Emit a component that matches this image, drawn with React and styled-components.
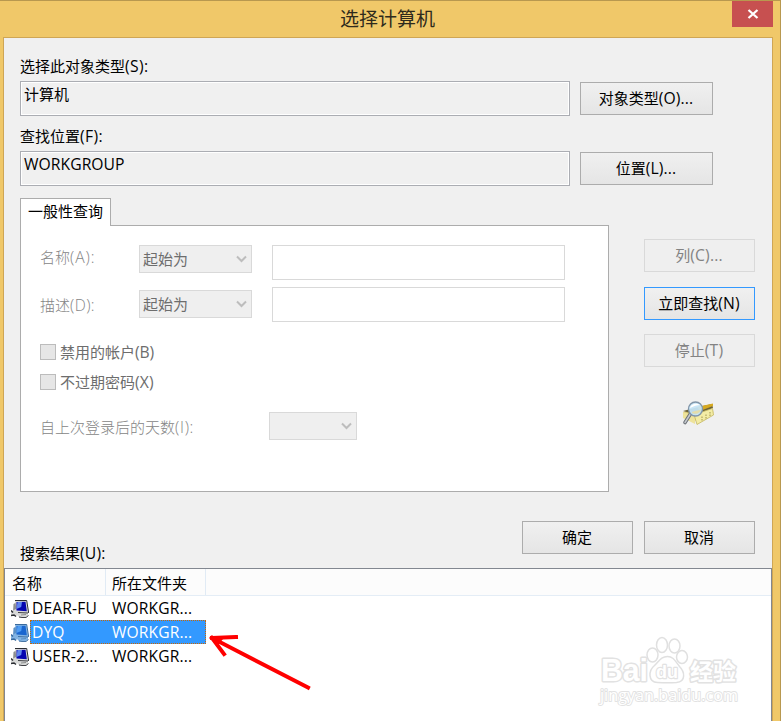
import React from "react";
import styled, { createGlobalStyle } from "styled-components";

const GlobalStyle = createGlobalStyle`
  *, *::before, *::after { box-sizing: border-box; }
  body {
    margin: 0;
    overflow: hidden;
    font-family: "Open Sans", "Noto Sans CJK SC", sans-serif;
    font-size: 15px;
    line-height: 20px;
    color: #000;
  }
`;

const Window = styled.div`
  width: 781px;
  height: 721px;
  display: flex;
  flex-direction: column;
  background: #f0c869;
  border-top: 1px solid #b8984f;
  border-right: 1px solid #b8984f;
  padding: 0 7px 0 3px;
  overflow: hidden;
`;

const TitleBar = styled.header`
  height: 36px;
  flex: none;
  display: grid;
  grid-template-columns: 1fr 41px;
  align-items: start;
`;

const Title = styled.h1`
  margin: 0;
  padding: 5px 0 0 40px;
  font-size: 19px;
  font-weight: 400;
  line-height: 26px;
  text-align: center;
  color: #2e2a1c;
`;

const CloseButton = styled.button`
  width: 41px;
  height: 26px;
  border: 0;
  padding: 0;
  background: #c75050;
  display: grid;
  place-items: center;
`;

const Client = styled.main`
  flex: 1;
  display: flex;
  flex-direction: column;
  background: #f0f0f0;
  border: 1px solid #cfa655;
  border-bottom: 0;
`;

const Form = styled.div`
  height: 530px;
  flex: none;
  display: flex;
  flex-direction: column;
  padding: 18px 16px 0;
`;

/* Latin letters run slightly larger than the CJK glyphs around them. */
const Latin = styled.span`
  font-size: 15.7px;
  line-height: 1;
  letter-spacing: ${(p) => p.$spacing || 0.15}px;
`;

const Label = styled.div`
  height: 25px;
  line-height: 20px;
`;

const PickRow = styled.div`
  height: 35px;
  display: flex;
  align-items: center;
  gap: 10px;
  margin-bottom: ${(p) => p.$after}px;
`;

const ReadOnlyField = styled.div`
  width: 550px;
  height: 35px;
  border: 1px solid #abadb3;
  box-shadow: inset 0 0 0 1px #fff;
  padding: 2px 3px;
  line-height: 20px;
`;

const Button = styled.button`
  width: ${(p) => p.$width || 111}px;
  height: 33px;
  flex: none;
  padding: 0 1px 2px 0;
  font: inherit;
  line-height: 20px;
  color: ${(p) => (p.disabled ? "#838383" : "#000")};
  background: ${(p) => (p.disabled ? "#efefef" : "linear-gradient(#f0f0f0, #e5e5e5)")};
  border: 1px solid ${(p) => (p.disabled ? "#d9d9d9" : p.$primary ? "#3399ff" : "#acacac")};
`;

const QueryArea = styled.div`
  display: flex;
  gap: 35px;
`;

const Tabs = styled.div`
  width: 589px;
`;

const Tab = styled.div`
  width: 91px;
  height: 28px;
  margin-bottom: -1px;
  position: relative;
  padding: 2px 0 0 7px;
  background: #fff;
  border: 1px solid #acacac;
  border-bottom: 0;
`;

const Panel = styled.section`
  height: 267px;
  display: flex;
  flex-direction: column;
  background: #fff;
  border: 1px solid #acacac;
  padding: 19px 19px 0;
`;

const CriteriaRow = styled.div`
  height: 35px;
  display: grid;
  grid-template-columns: 99px 113px 293px;
  margin-bottom: ${(p) => p.$after}px;
`;

const MutedLabel = styled.span`
  padding-top: ${(p) => p.$top}px;
  color: #858585;
  font-weight: 300;
  white-space: nowrap;
`;

const Select = styled.div`
  width: ${(p) => p.$width}px;
  height: 28px;
  margin-top: ${(p) => p.$top || 0}px;
  display: flex;
  align-items: center;
  justify-content: space-between;
  padding: 0 4px 0 3px;
  color: #6d6d6d;
  background: #efefef;
  border: 1px solid #d9d9d9;
`;

const TextInput = styled.div`
  width: 293px;
  height: 35px;
  margin-left: 20px;
  border: 1px solid #d9d9d9;
  background: #fff;
`;

const CheckRow = styled.div`
  height: 16px;
  display: flex;
  align-items: center;
  gap: 4px;
  margin-bottom: ${(p) => p.$after}px;
  color: #6d6d6d;
`;

const CheckBox = styled.span`
  width: 16px;
  height: 16px;
  background: #e6e6e6;
  border: 1px solid #bcbcbc;
`;

const LogonRow = styled.div`
  height: 28px;
  display: grid;
  grid-template-columns: 229px 88px;
`;

const Actions = styled.div`
  padding-top: 41px;
  display: flex;
  flex-direction: column;
`;

const ActionSlot = styled.div`
  height: ${(p) => p.$height}px;
`;

const IconSlot = styled.div`
  padding-left: 38px;
  line-height: 0;
`;

const Footer = styled.div`
  display: flex;
  align-items: flex-start;
  gap: 11px;
  padding-top: 29px;
`;

const ResultLabel = styled.div`
  width: 491px;
  padding-top: 22px;
`;

const ResultList = styled.section`
  flex: 1;
  position: relative;
  background: #fff;
  border: 1px solid #828790;
  border-bottom: 0;
`;

const ListHeader = styled.div`
  height: 27px;
  display: grid;
  grid-template-columns: 101px 100px 1fr;
  background: #fcfcfc;
  border-bottom: 1px solid #e4edf6;
`;

const HeaderCell = styled.div`
  padding: 4px 0 0 ${(p) => p.$left}px;
  border-right: 1px solid #e1ebf5;
`;

const ResultRow = styled.div`
  height: 24px;
  display: grid;
  grid-template-columns: 25px 176px;
`;

const IconCell = styled.div`
  padding: 4px 0 0 6px;
  line-height: 0;
`;

const Cells = styled.div`
  height: 24px;
  display: grid;
  grid-template-columns: 79px 1fr;
  font-size: 15.6px;
  letter-spacing: 0.15px;
  line-height: 23px;
  white-space: nowrap;
  color: ${(p) => (p.$selected ? "#fff" : "#000")};
  background: ${(p) => (p.$selected ? "#3399ff" : "transparent")};
  border: 1px ${(p) => (p.$selected ? "dotted #cc6600" : "solid transparent")};
`;

const CellText = styled.span`
  padding-left: ${(p) => p.$left}px;
`;

const Arrow = styled.svg`
  position: absolute;
  left: 203px;
  top: 62px;
`;

const Watermark = styled.svg`
  position: absolute;
  left: 584px;
  top: 62px;
`;

function Chevron() {
  return (
    <svg width="11" height="8" viewBox="0 0 11 8">
      <path d="M1 1.500 5.500 6 10 1.500" fill="none" stroke="#bdbdbd" strokeWidth="2" />
    </svg>
  );
}

function SearchBookIcon() {
  return (
    <svg width="33" height="26" viewBox="0 0 33 26">
      <path d="M1 12 17 8 32 12 15 21 1 16Z" fill="#d9c977" />
      <path d="M1 11 16 7 30 4 31 8 16 15Z" fill="#6b6238" />
      <path d="M15 7 31 3.500 31 6 18 11Z" fill="#d6a921" />
      <path d="M1 12 13 15.500 13 24 1 18Z" fill="#eee39a" />
      <path d="M12 14.500 30.500 8.500 31.500 15 15 24.500Z" fill="#f3eca5" stroke="#c4b660" strokeWidth=".8" />
      <path d="M20 16.500v4M24 14.500v4M28 12v4" stroke="#a0954f" strokeWidth="1" strokeDasharray="1.500 1" />
      <path d="m9 13-6 9.500" stroke="#6d7278" strokeWidth="3.600" strokeLinecap="round" />
      <path d="m9 13-6 9.500" stroke="#c5c9cd" strokeWidth="1.500" strokeLinecap="round" />
      <circle cx="13.500" cy="9" r="7" fill="#c6e5f7" fillOpacity=".93" stroke="#8195a8" strokeWidth="1.300" />
      <path d="M8 8a6 5 0 0 1 10-3c-3 0-6 1-10 3Z" fill="#fff" />
      <path d="M10 12c3-1 5-2 9-2a6 5 0 0 1-9 3Z" fill="#e4ddaa" />
    </svg>
  );
}

function ComputerIcon({ selected }) {
  const c = selected
    ? { light: "#82b3e2", mid: "#5a8fc4", screen: "#1a66cf", glow: "#4f9cf2", dark: "#3a6a9c" }
    : { light: "#d8d9d8", mid: "#8d8f8f", screen: "#0505b0", glow: "#5f86ee", dark: "#2b2d32" };
  return (
    <svg width="18" height="18" viewBox="0 0 18 18">
      <path d="M2.500 4 5 2.500 7 12 2 12Z" fill={c.mid} />
      <path d="M0 11.500 5 9l4 3-4 4-5-1Z" fill={c.light} />
      <path d="m0 10.500 2 2M0 15.500l3-.5 2 1.500" fill="none" stroke={c.dark} strokeWidth="1.500" />
      <path d="M4 .5H15.500L17.500 13 6 12Z" fill={c.light} />
      <path d="M4 .5H15.700L17.700 13" fill="none" stroke={c.dark} strokeWidth="1" />
      <path d="M5.500 2 14.500 1.800 15.800 11.300 5.500 10.500Z" fill={c.screen} />
      <path d="m6.500 2 4.500-.1-.8 5.100-4.700 2Z" fill={c.glow} />
      <path d="m7 12 10 .5V16l-3 1.500H8.500L6 15Z" fill={c.light} />
      <path d="m7 12.500 10 .5M8 17l3 .5h4l2.500-2" fill="none" stroke={c.dark} strokeWidth=".9" />
      <path d="m10 15 5-.5" stroke={c.mid} strokeWidth="1" />
    </svg>
  );
}

function BaiduWatermark() {
  const outline = { fill: "#fff", stroke: "#e2e2e2", strokeWidth: 3, strokeLinejoin: "round", paintOrder: "stroke" };
  return (
    <Watermark width="160" height="76" viewBox="0 0 160 76">
      <g fontFamily='"Liberation Sans", sans-serif' fontWeight="700">
        <text x="12" y="50" fontSize="31" textLength="47" lengthAdjust="spacingAndGlyphs" {...outline}>Bai</text>
        <g fill="#fff" stroke="#e0e0e0" strokeWidth="1.500">
          <ellipse cx="73" cy="14" rx="5.500" ry="7.500" />
          <ellipse cx="85.500" cy="15" rx="5.500" ry="7" />
          <ellipse cx="63.500" cy="24" rx="5.500" ry="7" />
          <ellipse cx="93" cy="26" rx="5.500" ry="6.500" />
          <path d="M78.500 25.500c6 0 8 5 12 10 5 5 7 15-3 16-4 .3-14 .3-19 0-10-.7-9-12-3-17 5-5 7-9 13-9Z" />
        </g>
        <text x="67" y="46.500" fontSize="19" textLength="22" lengthAdjust="spacingAndGlyphs" {...outline} strokeWidth="2.400">du</text>
        <text x="101" y="48.500" fontFamily='"Noto Sans CJK SC", sans-serif' fontSize="23" textLength="46" lengthAdjust="spacingAndGlyphs" {...outline}>经验</text>
      </g>
      <text x="11" y="70" fontFamily='"Open Sans", sans-serif' fontSize="15.500" textLength="138" lengthAdjust="spacingAndGlyphs" {...outline} strokeWidth="1.800">jingyan.baidu.com</text>
    </Watermark>
  );
}

const results = [
  { name: "DEAR-FU", folder: "WORKGR..." },
  { name: "DYQ", folder: "WORKGR...", selected: true },
  { name: "USER-2...", folder: "WORKGR..." },
];

export default function App() {
  return (
    <>
      <GlobalStyle />
      <Window>
        <TitleBar>
          <Title>选择计算机</Title>
          <CloseButton aria-label="关闭">
            <svg width="12" height="10" viewBox="0 0 12 10">
              <path d="m1.500 1 9 8m0-8-9 8" stroke="#fff" strokeWidth="2.300" />
            </svg>
          </CloseButton>
        </TitleBar>
        <Client>
          <Form>
            <Label>选择此对象类型<Latin $spacing={0.4}>(S):</Latin></Label>
            <PickRow $after={10}>
              <ReadOnlyField>计算机</ReadOnlyField>
              <Button $width={133}>对象类型<Latin>(O)...</Latin></Button>
            </PickRow>
            <Label>查找位置<Latin $spacing={0.4}>(F):</Latin></Label>
            <PickRow $after={12}>
              <ReadOnlyField><Latin $spacing={0.05}>WORKGROUP</Latin></ReadOnlyField>
              <Button $width={133}>位置<Latin>(L)...</Latin></Button>
            </PickRow>
            <QueryArea>
              <Tabs>
                <Tab>一般性查询</Tab>
                <Panel>
                  <CriteriaRow $after={7}>
                    <MutedLabel $top={2}>名称<Latin $spacing={0.9}>(A):</Latin></MutedLabel>
                    <Select $width={113}>起始为<Chevron /></Select>
                    <TextInput />
                  </CriteriaRow>
                  <CriteriaRow $after={22}>
                    <MutedLabel $top={8}>描述<Latin $spacing={0.4}>(D):</Latin></MutedLabel>
                    <Select $width={113} $top={3}>起始为<Chevron /></Select>
                    <TextInput />
                  </CriteriaRow>
                  <CheckRow $after={14}><CheckBox /><span>禁用的帐户<Latin $spacing={-0.1}>(B)</Latin></span></CheckRow>
                  <CheckRow $after={22}><CheckBox /><span>不过期密码<Latin>(X)</Latin></span></CheckRow>
                  <LogonRow>
                    <MutedLabel $top={5}>自上次登录后的天数<Latin $spacing={0.7}>(I):</Latin></MutedLabel>
                    <Select $width={88}><span /><Chevron /></Select>
                  </LogonRow>
                </Panel>
              </Tabs>
              <Actions>
                <ActionSlot $height={48}><Button disabled>列<Latin>(C)...</Latin></Button></ActionSlot>
                <ActionSlot $height={47}><Button $primary>立即查找<Latin>(N)</Latin></Button></ActionSlot>
                <ActionSlot $height={66}><Button disabled>停止<Latin>(T)</Latin></Button></ActionSlot>
                <IconSlot><SearchBookIcon /></IconSlot>
              </Actions>
            </QueryArea>
            <Footer>
              <ResultLabel>搜索结果<Latin>(U):</Latin></ResultLabel>
              <Button>确定</Button>
              <Button>取消</Button>
            </Footer>
          </Form>
          <ResultList>
            <ListHeader>
              <HeaderCell $left={7}>名称</HeaderCell>
              <HeaderCell $left={6}>所在文件夹</HeaderCell>
            </ListHeader>
            {results.map((r) => (
              <ResultRow key={r.name}>
                <IconCell><ComputerIcon selected={r.selected} /></IconCell>
                <Cells $selected={r.selected}>
                  <CellText $left={1}>{r.name}</CellText>
                  <CellText $left={2}>{r.folder}</CellText>
                </Cells>
              </ResultRow>
            ))}
            <Arrow width="105" height="62" viewBox="0 0 105 62">
              <path d="M4 7 100 56.500M4 7 28 6M4 7 16 23" fill="none" stroke="#f00" strokeWidth="4" strokeLinecap="square" />
              <path d="m3 5 12 3-5 6Z" fill="#f00" />
            </Arrow>
            <BaiduWatermark />
          </ResultList>
        </Client>
      </Window>
    </>
  );
}
